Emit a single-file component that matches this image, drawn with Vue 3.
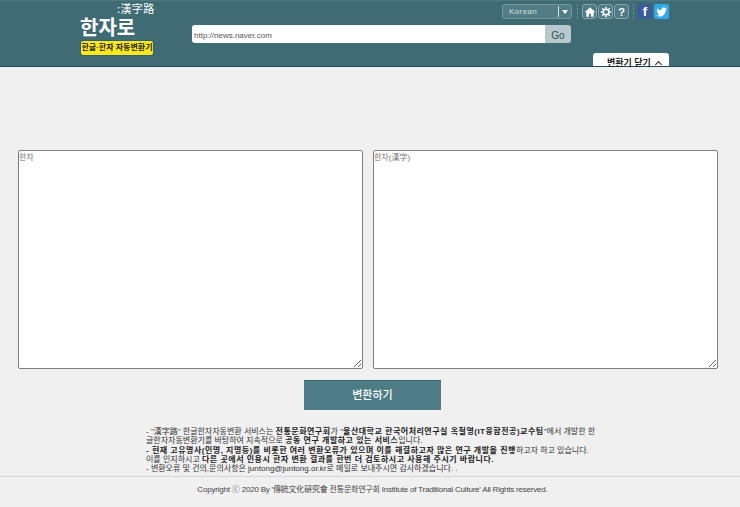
<script setup>
import { ref } from 'vue'

const url = ref('http://news.naver.com')
const source = ref('')
const result = ref('')
</script>

<template>
  <div class="page">
    <header class="top">
      <div class="logo">
        <div class="logo-hanja">:漢字路</div>
        <div class="logo-name">한자로</div>
        <div class="logo-badge">한글·한자 자동변환기</div>
      </div>
      <div class="top-main">
        <div class="tools">
          <div class="lang">
            <span class="lang-name">Korean</span>
            <span class="lang-arrow"></span>
          </div>
          <span class="dots"></span>
          <a class="tool">
            <svg viewBox="0 0 16 16" width="12" height="12"><path d="M8 1.500.8 8.200h2.300v6h3.600v-4h2.600v4h3.600v-6h2.300z" fill="#fff"/></svg>
          </a>
          <a class="tool">
            <svg viewBox="0 0 16 16" width="12" height="12"><circle cx="8" cy="8" r="3.800" fill="none" stroke="#fff" stroke-width="2"/><path d="M8 1v2.600M8 12.400V15M1 8h2.600M12.400 8H15M3 3l1.900 1.900M11.100 11.100 13 13M3 13l1.900-1.900M11.100 4.900 13 3" stroke="#fff" stroke-width="2"/></svg>
          </a>
          <a class="tool tool-help">?</a>
          <span class="dots"></span>
          <a class="social fb">f</a>
          <a class="social tw">
            <svg viewBox="0 0 16 16" width="13" height="13"><path d="M14.500 4.200c-.5.200-1 .4-1.500.4.500-.3 1-.8 1.200-1.400-.5.300-1.100.5-1.700.6a2.700 2.700 0 0 0-4.600 2.400C6 6.700 4 5.600 2.700 4c-.7 1.200-.4 2.800.8 3.600-.4 0-.8-.1-1.200-.3 0 1.300.9 2.400 2.100 2.700-.4.100-.8.100-1.200 0 .3 1.100 1.300 1.800 2.500 1.900A5.400 5.400 0 0 1 1.500 13a7.600 7.600 0 0 0 11.700-6.800c.5-.4 1-.9 1.300-2z" fill="#fff"/></svg>
          </a>
        </div>
        <form class="search" @submit.prevent>
          <input class="search-input" v-model="url" type="text">
          <button class="search-go" type="button">Go</button>
        </form>
        <div class="tab-row">
          <a class="close-tab">변환기 닫기 <span class="chev"></span></a>
        </div>
      </div>
    </header>

    <main class="converter">
      <div class="boxes">
        <textarea class="box" v-model="source" placeholder="한자"></textarea>
        <textarea class="box" v-model="result" placeholder="한자(漢字)"></textarea>
      </div>
      <button class="convert" type="button">변환하기</button>
      <div class="notes">
        <p>- "漢字路" 한글한자자동변환 서비스는 <b>전통문화연구회</b>가 "<b>울산대학교 한국어처리연구실 옥철영(IT융합전공)교수팀</b>"에서 개발한 한글한자자동변환기를 바탕하여 지속적으로 <b>공동 연구 개발하고 있는 서비스</b>입니다.</p>
        <p><b>- 현재 고유명사(인명, 지명등)를 비롯한 여러 변환오류가 있으며 이를 해결하고자 많은 연구 개발을 진행</b>하고자 하고 있습니다.</p>
        <p>이를 인지하시고 <b>다른 곳에서 인용시 한자 변환 결과를 한번 더 검토하시고 사용해 주시기 바랍니다.</b></p>
        <p>- 변환오류 및 건의,문의사항은 juntong@juntong.or.kr로 메일로 보내주시면 감사하겠습니다. .</p>
      </div>
    </main>

    <footer class="foot">Copyright ⓒ 2020 By '傳統文化硏究會 전통문화연구회 Institute of Traditional Culture' All Rights reserved.</footer>
  </div>
</template>

<style>
html, body {
  margin: 0;
  background: #f0f0f0;
}
</style>

<style scoped>
.page {
  width: 740px;
  height: 507px;
  overflow: hidden;
  background: #f0f0f0;
  font-family: "Liberation Sans", "Noto Sans CJK KR", sans-serif;
}

.top {
  height: 65px;
  display: flex;
  padding-left: 80px;
  background: #3f6b75;
  border-top: 1px solid #4d7882;
  border-bottom: 1px solid #1f4f5c;
}

.logo {
  width: 112px;
  display: flex;
  flex-direction: column;
  color: #fff;
}

.logo-hanja {
  margin: 1px 0 0 37px;
  height: 13px;
  font-family: "Noto Sans CJK KR", serif;
  font-size: 11px;
  line-height: 13px;
  letter-spacing: 0.4px;
  white-space: nowrap;
}

.logo-name {
  height: 26px;
  font-family: "Noto Sans CJK KR", serif;
  font-size: 20px;
  line-height: 24px;
  font-weight: 700;
  white-space: nowrap;
}

.logo-badge {
  width: 72px;
  height: 14px;
  box-sizing: border-box;
  margin-left: 1px;
  background: #ffe81a;
  border-radius: 2px;
  box-shadow: 0 0 0 1px #2f5f7c;
  color: #222;
  font-size: 8px;
  font-weight: 700;
  line-height: 14px;
  text-align: center;
  white-space: nowrap;
}

.top-main {
  width: 477px;
  display: flex;
  flex-direction: column;
}

.tools {
  display: flex;
  justify-content: flex-end;
  align-items: center;
  height: 15px;
  margin-top: 3px;
}

.lang {
  width: 70px;
  height: 15px;
  box-sizing: border-box;
  display: flex;
  justify-content: space-between;
  align-items: center;
  margin-right: 1px;
  border: 1px solid #76979f;
  border-radius: 3px;
  background: #527c86;
  color: #d5e0e3;
  font-size: 8px;
}

.lang-name {
  margin-left: 6px;
  letter-spacing: 0.4px;
}

.lang-arrow {
  width: 13px;
  height: 11px;
  box-sizing: border-box;
  display: flex;
  align-items: center;
  justify-content: center;
  border-left: 1px solid #d5e0e3;
}

.lang-arrow::after {
  content: "";
  border-top: 4px solid #fff;
  border-left: 3px solid transparent;
  border-right: 3px solid transparent;
}

.dots {
  width: 0;
  height: 15px;
  margin: 0 4px;
  border-left: 1px dotted #7b9aa2;
}

.tool {
  width: 15px;
  height: 15px;
  box-sizing: border-box;
  display: flex;
  align-items: center;
  justify-content: center;
  margin-right: 1px;
  border: 1px solid #86a3aa;
  border-radius: 3px;
  background: #4f7b86;
}

.tool svg {
  flex: none;
}

.tool-help {
  margin-right: 0;
  color: #fff;
  font-size: 11px;
  font-weight: 700;
}

.social {
  height: 15px;
  display: flex;
  align-items: center;
  justify-content: center;
  border-radius: 2px;
  color: #fff;
}

.fb {
  width: 14px;
  margin-right: 2px;
  background: #3b5a9a;
  font-size: 13px;
  font-weight: 700;
}

.tw {
  width: 15px;
  background: #2fa9e8;
}

.search {
  display: flex;
  width: 379px;
  height: 19px;
  margin-top: 6px;
}

.search-input {
  flex: 1;
  min-width: 0;
  box-sizing: border-box;
  padding: 3px 2px 0;
  border: 0;
  border-radius: 3px 0 0 3px;
  background: #fff;
  color: #555;
  font-family: inherit;
  font-size: 8px;
  outline: 0;
}

.search-go {
  width: 26px;
  padding: 2px 0 0;
  border: 0;
  border-radius: 0 3px 3px 0;
  background: #b8c9ce;
  color: #2f4c55;
  font-family: inherit;
  font-size: 10px;
}

.tab-row {
  display: flex;
  justify-content: flex-end;
  margin-top: 10px;
}

.close-tab {
  width: 76px;
  height: 13px;
  box-sizing: border-box;
  background: #fff;
  border-radius: 3px 3px 0 0;
  padding-left: 14px;
  color: #222;
  font-size: 9px;
  font-weight: 700;
  line-height: 20px;
  white-space: nowrap;
}

.chev {
  display: inline-block;
  width: 4px;
  height: 4px;
  margin: 0 0 0 3px;
  border-top: 1.500px solid #222;
  border-left: 1.500px solid #222;
  transform: rotate(45deg);
  vertical-align: -1px;
}

.converter {
  display: flex;
  flex-direction: column;
  align-items: flex-start;
  padding: 83px 0 0 18px;
}

.boxes {
  display: flex;
  gap: 10px;
}

.box {
  width: 345px;
  height: 219px;
  box-sizing: border-box;
  margin: 0;
  padding: 0;
  border: 1px solid #808080;
  border-radius: 2px;
  background: #fff;
  font-family: inherit;
  font-size: 8px;
  outline: 0;
}

.box::placeholder {
  color: #757575;
}

.convert {
  width: 137px;
  height: 30px;
  margin: 11px 0 0 286px;
  padding: 0 0 3px;
  border: 0;
  border-top: 1px solid #356572;
  background: #4e7c86;
  color: #fff;
  font-family: inherit;
  font-size: 11px;
  font-weight: 500;
}

.notes {
  width: 452px;
  margin: 17px 0 0 128px;
  color: #333;
  font-size: 8px;
  line-height: 9.300px;
  word-break: break-all;
}

.notes p {
  margin: 0;
}

.notes b {
  color: #222;
  letter-spacing: 0.500px;
}

.foot {
  margin-top: 3px;
  height: 30px;
  padding-left: 5px;
  border-top: 1px solid #d6d6de;
  color: #444;
  font-size: 8px;
  letter-spacing: -0.200px;
  line-height: 26px;
  text-align: center;
}
</style>
